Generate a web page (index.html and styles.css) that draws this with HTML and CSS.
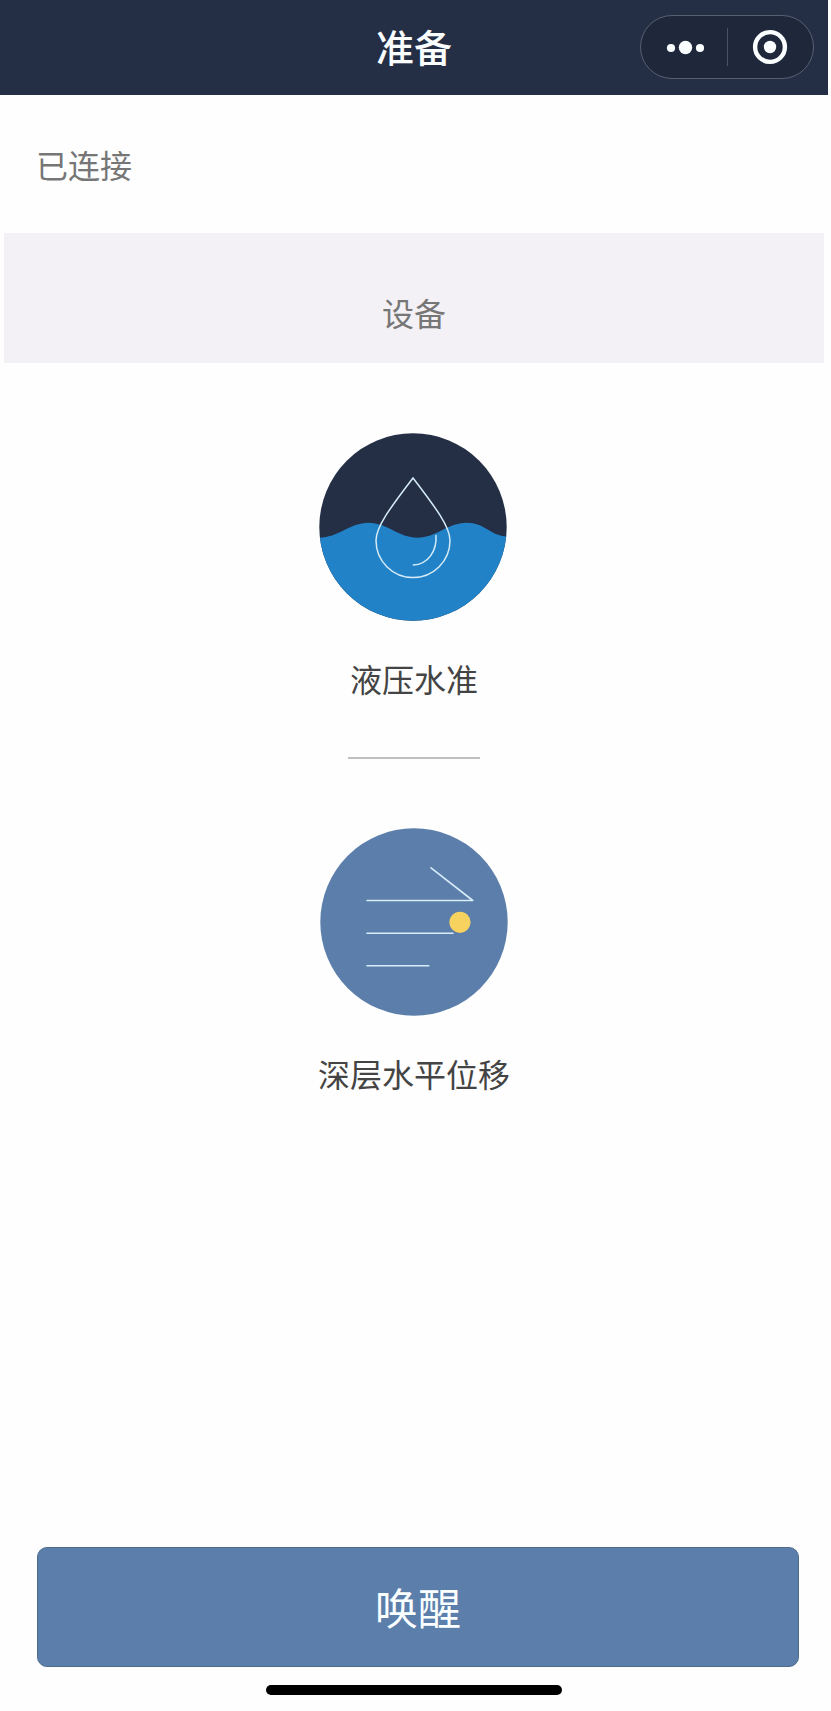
FILE: index.html
```html
<!doctype html>
<html lang="zh-CN">

<head>
    <meta charset="utf-8" />
    <meta name="viewport" content="width=device-width, user-scalable=no" />
    <title>准备</title>
    <link rel="stylesheet" href="styles.css">
</head>

<body>
	<div class="page">
		<header class="navbar">
			<h1 class="title">准备</h1>
			<div class="capsule">
				<svg width="174" height="64" viewBox="0 0 174 64">
					<rect x="0.5" y="0.5" width="173" height="63" rx="31.5" fill="#1f273b" stroke="#586072" />
					<g fill="#fafeff">
						<circle cx="31" cy="33" r="4.1" />
						<circle cx="45.5" cy="32.5" r="6.7" />
						<circle cx="60" cy="33" r="4.1" />
						<circle cx="130" cy="32" r="6.2" />
					</g>
					<path d="M87.5 13V51" stroke="#4b5265" />
					<circle cx="130" cy="32" r="14.9" fill="none" stroke="#fafeff" stroke-width="4.4" />
				</svg>
			</div>
		</header>

		<div class="status">已连接</div>
		<div class="section">设备</div>

		<main class="devices">
			<div class="device level">
				<svg class="icon" width="188" height="188" viewBox="0 0 188 188">
					<defs>
						<clipPath id="round"><circle cx="94" cy="94" r="93.7" /></clipPath>
					</defs>
					<g clip-path="url(#round)">
						<rect width="188" height="188" fill="#242f45" />
						<path d="M0 104.7C19 104.7 31 89.7 49.5 89.7S80 104.7 98.5 104.7S129 89.7 147.5 89.7S172 103 188 103.5V188H0Z" fill="#2182c7" />
					</g>
					<g fill="none" stroke="#d5ebf8" stroke-width="1.5">
						<path d="M94 45C71 75 57 94 57 107.5A37 37 0 0 0 131 107.5C131 94 117 75 94 45Z" />
						<path d="M117 102.5C118 118 109 131.5 94.3 132" stroke-linecap="round" />
					</g>
				</svg>
				<span class="label">液压水准</span>
			</div>
			<div class="divider"></div>
			<div class="device shift">
				<svg class="icon" width="188" height="188" viewBox="0 0 188 188">
					<circle cx="94" cy="94" r="93.7" fill="#5b7eab" />
					<g fill="none" stroke="#d8ecfa" stroke-width="1.6" stroke-linecap="round" stroke-linejoin="round">
						<path d="M47 72.5H152.8L111 39.8" />
						<path d="M47 105.3H133" />
						<path d="M47 137.7H108.8" />
					</g>
					<circle cx="140" cy="94.3" r="10.6" fill="#f8d25f" />
				</svg>
				<span class="label">深层水平位移</span>
			</div>
		</main>

		<button class="wake" type="button">唤醒</button>
		<div class="homebar"></div>
	</div>
</body>

</html>
```

FILE: styles.css
```css
* {
	box-sizing: border-box;
	margin: 0;
	padding: 0;
}

body {
	background-color: #fefefe;
	font-family: "Noto Sans CJK SC", sans-serif;
	font-size: 32px;
	font-weight: 400;
}

.page {
	display: flex;
	flex-direction: column;
	width: 828px;
	height: 1711px;
}

/* top bar */
.navbar {
	display: grid;
	grid-template-columns: 1fr auto 1fr;
	align-items: start;
	height: 95px;
	padding-right: 14px;
	padding-left: 14px;
	background-color: #242f45;
}

.title {
	grid-column: 2;
	color: #fafeff;
	font-size: 38px;
	font-weight: 500;
	line-height: 91px;
}

.capsule {
	justify-self: end;
	height: 64px;
	margin-top: 15px;
}

.status {
	height: 138px;
	padding-left: 36px;
	color: #767676;
	line-height: 138px;
}

.section {
	height: 130px;
	margin: 0 4px;
	padding-top: 32px;
	background-color: #f3f1f5;
	color: #767676;
	line-height: 94px;
	text-align: center;
}

/* device list */
.devices {
	display: flex;
	flex: 1;
	flex-direction: column;
	align-items: center;
	padding-top: 70px;
}

.device {
	display: flex;
	flex-direction: column;
	align-items: center;
}

.level .icon {
	margin-right: 2px;
}

.icon {
	display: block;
}

.label {
	margin-top: 34px;
	color: #444;
	line-height: 46px;
}

.divider {
	width: 132px;
	height: 2px;
	margin: 56px 0 69px;
	background-color: #bfbfbf;
}

/* bottom */
.wake {
	width: 762px;
	height: 120px;
	margin-left: 37px;
	padding-bottom: 3px;
	border: 1px solid #4c6c8c;
	border-radius: 10px;
	background-color: #5b7eab;
	color: #fafeff;
	font-family: inherit;
	font-size: 43px;
	font-weight: 400;
}

.homebar {
	width: 296px;
	height: 10px;
	margin: 18px auto 16px;
	border-radius: 5px;
	background-color: #000;
}
```
